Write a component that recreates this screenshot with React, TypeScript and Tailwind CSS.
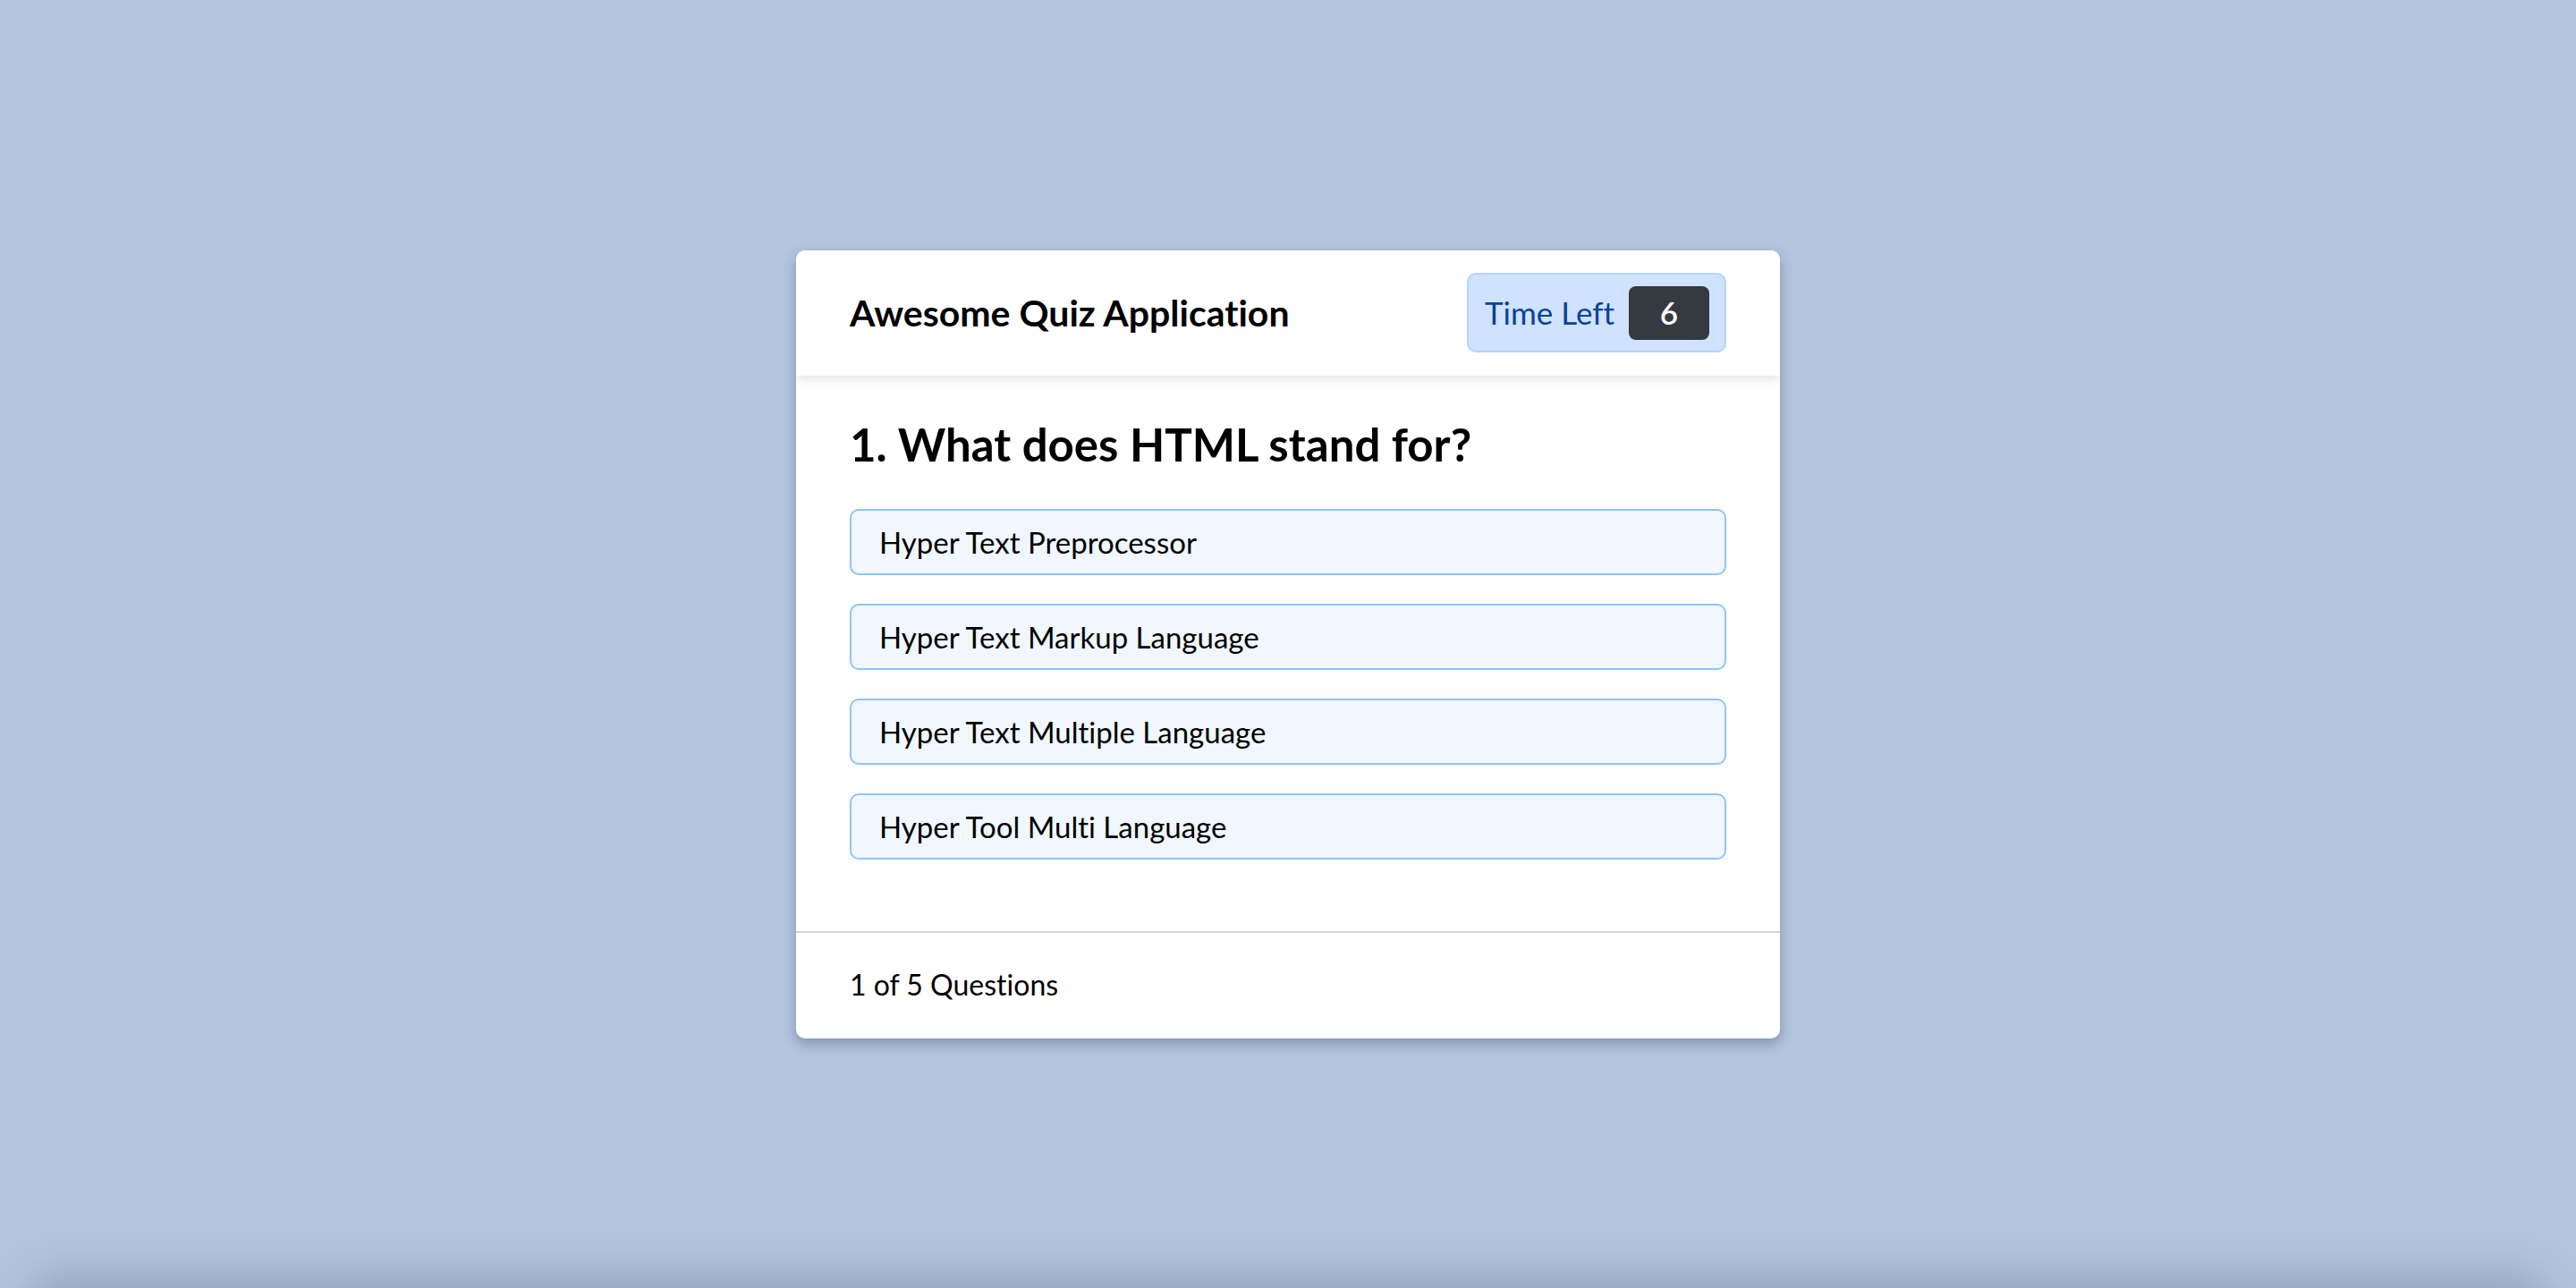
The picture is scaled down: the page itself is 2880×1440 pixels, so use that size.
import React from "react";

const options = [
  "Hyper Text Preprocessor",
  "Hyper Text Markup Language",
  "Hyper Text Multiple Language",
  "Hyper Tool Multi Language",
];

export default function App() {
  return (
    <div
      className="relative overflow-hidden h-screen w-full bg-[#b3c4dd] flex items-center justify-center [font-variant-ligatures:none]"
      style={{ fontFamily: "Lato, 'Open Sans', sans-serif" }}
    >
      {/* soft shade along the bottom edge */}
      <div className="absolute left-[40px] right-[40px] -bottom-[60px] h-[60px] rounded-[40px] shadow-[0_0_50px_10px_rgba(70,90,120,0.35)]" />

      <div className="relative w-[1100px] bg-white rounded-[10px] overflow-hidden shadow-[0_6px_14px_rgba(40,60,90,0.35)]">
        {/* header */}
        <div className="relative z-10 h-[140px] px-[60px] flex items-center justify-between bg-white shadow-[0_5px_10px_rgba(0,0,0,0.09)]">
          <h1 className="text-[41px] leading-[1.2] font-bold text-black">Awesome Quiz Application</h1>
          <div className="h-[89px] w-[290px] pl-[18px] pr-[17px] flex items-center justify-between bg-[#cfe2ff] border-2 border-[#b6d4fe] rounded-[10px]">
            <span className="text-[35px] leading-none text-[#084298]">Time Left</span>
            <span className="h-[60px] w-[90px] flex items-center justify-center bg-[#343a40] rounded-[8px] text-white text-[35px] font-semibold leading-none">
              6
            </span>
          </div>
        </div>

        {/* body */}
        <div className="px-[60px] pt-[46px] pb-[80px]">
          <h2 className="text-[51px] leading-[62px] font-bold text-black mb-[41px]">1. What does HTML stand for?</h2>
          <div className="flex flex-col gap-[32px]">
            {options.map((opt) => (
              <div
                key={opt}
                className="border-2 border-[#90c4f9] bg-[#f0f7ff] rounded-[10px] px-[31px] py-[16px] text-[33px] leading-[38px] text-black cursor-pointer"
              >
                {opt}
              </div>
            ))}
          </div>
        </div>

        {/* footer */}
        <div className="h-[120px] border-t-2 border-[#d4d4d4] px-[60px] flex items-center">
          <span className="text-[32px] leading-[1.2] text-black">1 of 5 Questions</span>
        </div>
      </div>
    </div>
  );
}
